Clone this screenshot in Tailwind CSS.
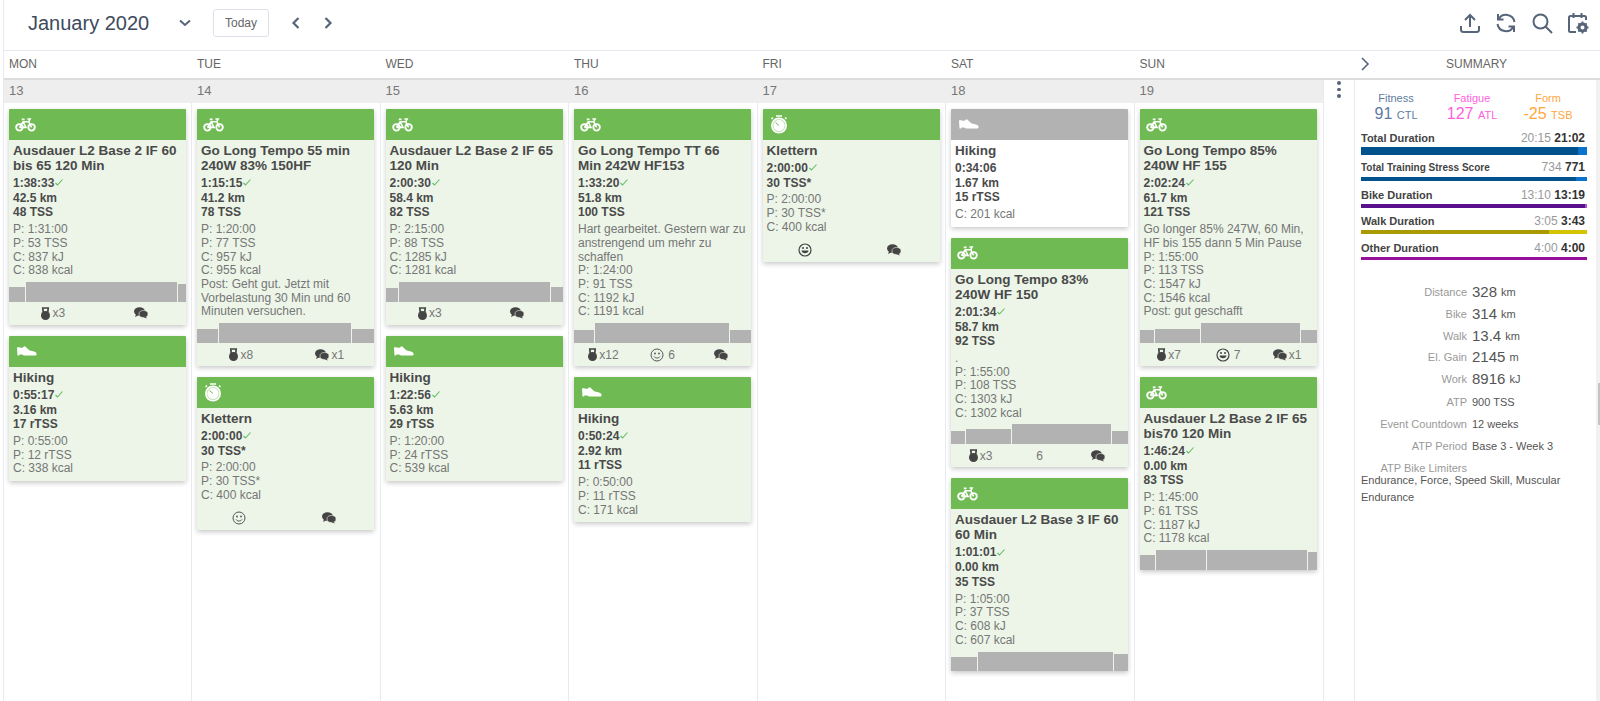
<!DOCTYPE html>
<html lang="en">
  <head>
    <meta charset="UTF-8" />
    <meta name="viewport" content="width=device-width, initial-scale=1.0" />
    <title>Calendar</title>
    <script src="https://cdn.jsdelivr.net/npm/@tailwindcss/browser@4"></script>
  </head>
  <body class="bg-white h-[701px] overflow-hidden font-['Liberation_Sans',Arial,sans-serif] text-[#444]">
    <div class="ml-[3px] border-l border-[#e6ebf2] h-[701px] flex flex-col">
      <!-- toolbar -->
      <header class="h-[51px] shrink-0 flex items-center border-b border-[#e4e8ef] pl-[24px] pr-[11px] pb-[4px] text-[#56657a]">
        <h1 class="text-[20px] leading-none text-[#3d4a5c] w-[150px]">January 2020</h1>
        <svg class="w-[14px] h-[14px]" viewBox="0 0 14 14" fill="none" stroke="currentColor" stroke-width="2"><path d="M2 4.500l5 4.500 5-4.500" /></svg>
        <button class="ml-[21px] w-[56px] h-[28px] border border-[#dde1e7] rounded-[3px] text-[12px] text-[#666]">Today</button>
        <svg class="ml-[20px] w-[14px] h-[14px]" viewBox="0 0 14 14" fill="none" stroke="currentColor" stroke-width="2.200"><path d="M9.500 2l-5 5 5 5" /></svg>
        <svg class="ml-[18px] w-[14px] h-[14px]" viewBox="0 0 14 14" fill="none" stroke="currentColor" stroke-width="2.200"><path d="M4.500 2l5 5-5 5" /></svg>
        <div class="ml-auto flex items-center gap-[14px]">
          <svg class="w-[22px] h-[22px]" viewBox="0 0 22 22" fill="none" stroke="currentColor" stroke-width="2"><path d="M11 15V3M6 8l5-5 5 5M2 14v3.500a2.500 2.500 0 0 0 2.500 2.500h13a2.500 2.500 0 0 0 2.500-2.500V14" /></svg>
          <svg class="w-[22px] h-[22px]" viewBox="0 0 22 22" fill="none" stroke="currentColor" stroke-width="2"><path d="M3 2v5.500h5.500M3.500 7.500A8.500 8.500 0 0 1 19.500 10M19 20v-5.500h-5.500M18.500 14.500A8.500 8.500 0 0 1 2.500 12" /></svg>
          <svg class="w-[22px] h-[22px]" viewBox="0 0 22 22" fill="none" stroke="currentColor" stroke-width="2"><circle cx="9.500" cy="9.500" r="7" /><path d="M14.500 14.500L21 21" /></svg>
          <svg class="w-[22px] h-[22px]" viewBox="0 0 22 22" fill="none" stroke="currentColor" stroke-width="2"><path d="M9 20H3.500A1.500 1.500 0 0 1 2 18.500V5.500A1.500 1.500 0 0 1 3.500 4h14A1.500 1.500 0 0 1 19 5.500V8M6.500 1v5M14.500 1v5" /><circle cx="15.500" cy="15.500" r="3.500" stroke-width="3" /><path stroke-width="1.800" d="M15.500 9.500v2M15.500 19.500v2M9.500 15.500h2M19.500 15.500h2M11.300 11.300l1.400 1.400M18.300 18.300l1.400 1.400M11.300 19.700l1.400-1.400M18.300 12.700l1.400-1.400" /></svg>
        </div>
      </header>

      <!-- weekday names -->
      <div class="h-[29px] shrink-0 flex items-center border-b-2 border-[#dcdcdc] pb-[2px] text-[12px] text-[#666]">
        <div class="w-[187px] pl-[5px]">MON</div>
        <div class="w-[188.500px] pl-[6px]">TUE</div>
        <div class="w-[188.500px] pl-[6px]">WED</div>
        <div class="w-[188.500px] pl-[6px]">THU</div>
        <div class="w-[188.500px] pl-[6px]">FRI</div>
        <div class="w-[188.500px] pl-[6px]">SAT</div>
        <div class="w-[188.500px] pl-[6px]">SUN</div>
        <div class="flex-1 flex items-center pl-[37px] pr-[10px]">
          <svg class="w-[12px] h-[14px] text-[#56657a]" viewBox="0 0 12 14" fill="none" stroke="currentColor" stroke-width="1.600"><path d="M3 1l6 6-6 6" /></svg>
          <span class="ml-[75px]">SUMMARY</span>
        </div>
      </div>

      <div class="flex-1 flex min-h-0">
        <!-- week grid -->
        <div class="w-[1319px] shrink-0 flex flex-col">
          <div class="h-[23px] shrink-0 bg-[#eeeeee] flex items-center pb-[2px] text-[13px] text-[#777]">
            <div class="w-[187px] pl-[5px]">13</div>
            <div class="w-[188.500px] pl-[6px]">14</div>
            <div class="w-[188.500px] pl-[6px]">15</div>
            <div class="w-[188.500px] pl-[6px]">16</div>
            <div class="w-[188.500px] pl-[6px]">17</div>
            <div class="w-[188.500px] pl-[6px]">18</div>
            <div class="w-[188.500px] pl-[6px]">19</div>
          </div>
          <div id="week" class="flex-1 flex min-h-0"></div>
        </div>

        <!-- three dot menu -->
        <div class="w-[31px] shrink-0 border-l border-[#e6ebf2] flex flex-col items-center gap-[3px] pt-[1px]">
          <span class="w-[3.500px] h-[3.500px] rounded-full bg-[#56657a]"></span>
          <span class="w-[3.500px] h-[3.500px] rounded-full bg-[#56657a]"></span>
          <span class="w-[3.500px] h-[3.500px] rounded-full bg-[#56657a]"></span>
        </div>

        <!-- summary -->
        <aside class="w-[242px] shrink-0 border-l border-[#e6ebf2] px-[6px] pt-[11px] text-[#444]">
          <div class="grid grid-cols-3 text-center w-[228px] -ml-[3px]">
            <div class="text-[#5f7ba0]">
              <div class="text-[11px] leading-[14px]">Fitness</div>
              <div class="text-[16px] leading-[18px]">91 <span class="text-[11px]">CTL</span></div>
            </div>
            <div class="text-[#ff5fdc]">
              <div class="text-[11px] leading-[14px]">Fatigue</div>
              <div class="text-[16px] leading-[18px]">127 <span class="text-[11px]">ATL</span></div>
            </div>
            <div class="text-[#ffa63d]">
              <div class="text-[11px] leading-[14px]">Form</div>
              <div class="text-[16px] leading-[18px]">-25 <span class="text-[11px]">TSB</span></div>
            </div>
          </div>
          <div id="bars" class="mt-[6px] w-[226px]"></div>
          <div class="mt-[21.500px] w-[226px] text-[11px] text-[#555]">
            <div class="flex items-center h-[22px]"><span class="w-[106px] text-right text-[#999]">Distance</span><span class="ml-[5px] text-[15px]">328</span><span class="ml-[4px]">km</span></div>
            <div class="flex items-center h-[22px]"><span class="w-[106px] text-right text-[#999]">Bike</span><span class="ml-[5px] text-[15px]">314</span><span class="ml-[4px]">km</span></div>
            <div class="flex items-center h-[21px]"><span class="w-[106px] text-right text-[#999]">Walk</span><span class="ml-[5px] text-[15px]">13.4</span><span class="ml-[4px]">km</span></div>
            <div class="flex items-center h-[22px]"><span class="w-[106px] text-right text-[#999]">El. Gain</span><span class="ml-[5px] text-[15px]">2145</span><span class="ml-[4px]">m</span></div>
            <div class="flex items-center h-[22px]"><span class="w-[106px] text-right text-[#999]">Work</span><span class="ml-[5px] text-[15px]">8916</span><span class="ml-[4px]">kJ</span></div>
            <div class="flex items-center h-[22px] mt-[1px]"><span class="w-[106px] text-right text-[#999]">ATP</span><span class="ml-[5px]">900 TSS</span></div>
            <div class="flex items-center h-[22px]"><span class="w-[106px] text-right text-[#999]">Event Countdown</span><span class="ml-[5px]">12 weeks</span></div>
            <div class="flex items-center h-[22px]"><span class="w-[106px] text-right text-[#999]">ATP Period</span><span class="ml-[5px]">Base 3 - Week 3</span></div>
            <div class="w-[106px] mt-[6px] text-right text-[#999] whitespace-nowrap leading-[8px]">ATP Bike Limiters</div>
            <div class="leading-[17px] w-[205px]">Endurance, Force, Speed Skill, Muscular Endurance</div>
          </div>
        </aside>
        <div class="relative flex-1 bg-[#f1f1f1]">
          <div class="absolute left-[2px] top-[303px] w-full h-[42px] bg-[#c4c4c4]"></div>
        </div>
      </div>
    </div>

    <script>
      const bikeIcon = `<svg class="w-[21px] h-[14px]" viewBox="0 0 22 15" fill="none" stroke="#fff"><circle cx="4.500" cy="10" r="3.500" stroke-width="2"/><circle cx="17.500" cy="10" r="3.500" stroke-width="2"/><path stroke-width="1.700" d="M4.500 10l4-6h6l3 6M8.500 4l3 6h-7M7 1.500h3M13 1h3l-1.500 3"/></svg>`;
      const shoeIcon = `<svg class="w-[21px] h-[15px] ml-[1px]" viewBox="0 0 21 15" fill="#fff"><path d="M1 3.500C2 3 3 3.500 4 3.500 5.500 4 7 4 8 2.500l1-.3 4 3.800c2 1.300 7 1 7.500 3.500.200 1 0 2-1 2H8l-2-1H3.500l-.5 1H1.500z"/></svg>`;
      const watchIcon = `<svg class="w-[18px] h-[19px] ml-[1px]" viewBox="0 0 18 19" fill="none"><circle cx="9" cy="10.500" r="8" fill="#fff"/><circle cx="9" cy="10.500" r="6.300" fill="#a8d696"/><circle cx="9" cy="10.500" r="5.700" fill="#fff"/><path d="M6 1h6M3 2.500l-1.500 1.500M15 2.500l1.500 1.500" stroke="#fff" stroke-width="1.500"/><path d="M5.500 7.500l3.500 3" stroke="#6fba52"/></svg>`;
      const medalIcon = `<svg class="w-[9px] h-[13px]" viewBox="0 0 9 13" fill="#444"><circle cx="4.500" cy="8.500" r="4.500"/><path d="M2.200 5L1.800 1h5.400l-.4 4" fill="none" stroke="#444" stroke-width="1.700"/></svg>`;
      const chatIcon = `<svg class="w-[14px] h-[12px]" viewBox="0 0 14 12" fill="#444"><ellipse cx="5.500" cy="4.500" rx="5.500" ry="4.200"/><path d="M2 7.500L1 10l3.500-1.800z"/><ellipse cx="9.500" cy="7" rx="4.500" ry="3.500" stroke="#ecf5e8" stroke-width=".6"/><path d="M11.500 9.500l1.500 2-3.500-1.200z"/></svg>`;
      const smileIcon = `<svg class="w-[14px] h-[14px] mr-[2px]" viewBox="0 0 14 14" fill="none" stroke="#555"><circle cx="7" cy="7" r="6"/><circle cx="5" cy="5.500" r=".9" fill="#555" stroke="none"/><circle cx="9" cy="5.500" r=".9" fill="#555" stroke="none"/><path d="M4 8.500c1.500 2 4.500 2 6 0"/></svg>`;
      const grinIcon = `<svg class="w-[14px] h-[14px] mr-[2px]" viewBox="0 0 14 14" fill="none" stroke="#444" stroke-width="1.200"><circle cx="7" cy="7" r="6"/><circle cx="5" cy="5" r="1" fill="#444" stroke="none"/><circle cx="9" cy="5" r="1" fill="#444" stroke="none"/><path d="M3.500 7.500h7c0 3.500-7 3.500-7 0z" fill="#444" stroke="none"/></svg>`;
      const checkIcon = `<svg class="inline-block w-[8px] h-[7px] ml-[1px] mb-[2px]" viewBox="0 0 8 7" fill="none" stroke="#62bd62" stroke-width="1.100"><path d="M.5 4l2 2L7.500 .5"/></svg>`;
      const icons = { bike: bikeIcon, shoe: shoeIcon, watch: watchIcon };

      // stat lines use the same shape for every workout card
      const week = [
        [
          { icon: "bike", title: "Ausdauer L2 Base 2 IF 60 bis 65 120 Min", stats: ["1:38:33", "42.5 km", "48 TSS"], lines: ["P: 1:31:00", "P: 53 TSS", "C: 837 kJ", "C: 838 kcal"], chart: [[17, 15], [152, 20], [8, 18]], foot: [["medal", "x3"], ["chat", ""]] },
          { icon: "shoe", title: "Hiking", stats: ["0:55:17", "3.16 km", "17 rTSS"], lines: ["P: 0:55:00", "P: 12 rTSS", "C: 338 kcal"] },
        ],
        [
          { icon: "bike", title: "Go Long Tempo 55 min 240W 83% 150HF", stats: ["1:15:15", "41.2 km", "78 TSS"], lines: ["P: 1:20:00", "P: 77 TSS", "C: 957 kJ", "C: 955 kcal", "Post: Geht gut. Jetzt mit Vorbelastung 30 Min und 60 Minuten versuchen."], chart: [[22, 14], [133, 20], [22, 14]], foot: [["medal", "x8"], ["chat", "x1"]] },
          { icon: "watch", title: "Klettern", stats: ["2:00:00", "30 TSS*"], lines: ["P: 2:00:00", "P: 30 TSS*", "C: 400 kcal"], foot: [["smile", ""], ["chat", ""]] },
        ],
        [
          { icon: "bike", title: "Ausdauer L2 Base 2 IF 65 120 Min", stats: ["2:00:30", "58.4 km", "82 TSS"], lines: ["P: 2:15:00", "P: 88 TSS", "C: 1285 kJ", "C: 1281 kcal"], chart: [[13, 14], [152, 20], [12, 15]], foot: [["medal", "x3"], ["chat", ""]] },
          { icon: "shoe", title: "Hiking", stats: ["1:22:56", "5.63 km", "29 rTSS"], lines: ["P: 1:20:00", "P: 24 rTSS", "C: 539 kcal"] },
        ],
        [
          { icon: "bike", title: "Go Long Tempo TT 66 Min 242W HF153", stats: ["1:33:20", "51.8 km", "100 TSS"], lines: ["Hart gearbeitet. Gestern war zu anstrengend um mehr zu schaffen", "P: 1:24:00", "P: 91 TSS", "C: 1192 kJ", "C: 1191 kcal"], chart: [[21, 13], [135, 20], [21, 13]], foot: [["medal", "x12"], ["smile", "6"], ["chat", ""]] },
          { icon: "shoe", title: "Hiking", stats: ["0:50:24", "2.92 km", "11 rTSS"], lines: ["P: 0:50:00", "P: 11 rTSS", "C: 171 kcal"] },
        ],
        [
          { icon: "watch", title: "Klettern", stats: ["2:00:00", "30 TSS*"], lines: ["P: 2:00:00", "P: 30 TSS*", "C: 400 kcal"], foot: [["grin", ""], ["chat", ""]] },
        ],
        [
          { icon: "shoe", title: "Hiking", stats: ["0:34:06", "1.67 km", "15 rTSS"], lines: ["C: 201 kcal"], unplanned: true, noCheck: true },
          { icon: "bike", title: "Go Long Tempo 83% 240W HF 150", stats: ["2:01:34", "58.7 km", "92 TSS"], lines: [".", "P: 1:55:00", "P: 108 TSS", "C: 1303 kJ", "C: 1302 kcal"], chart: [[15, 13], [46, 15], [100, 20], [16, 13]], foot: [["medal", "x3"], ["none", "6"], ["chat", ""]] },
          { icon: "bike", title: "Ausdauer L2 Base 3 IF 60 60 Min", stats: ["1:01:01", "0.00 km", "35 TSS"], lines: ["P: 1:05:00", "P: 37 TSS", "C: 608 kJ", "C: 607 kcal"], chart: [[27, 14], [136, 19], [14, 17]] },
        ],
        [
          { icon: "bike", title: "Go Long Tempo 85% 240W HF 155", stats: ["2:02:24", "61.7 km", "121 TSS"], lines: ["Go longer 85% 247W, 60 Min, HF bis 155 dann 5 Min Pause", "P: 1:55:00", "P: 113 TSS", "C: 1547 kJ", "C: 1546 kcal", "Post: gut geschafft"], chart: [[15, 13], [46, 14], [100, 20], [16, 13]], foot: [["medal", "x7"], ["grin", "7"], ["chat", "x1"]] },
          { icon: "bike", title: "Ausdauer L2 Base 2 IF 65 bis70 120 Min", stats: ["1:46:24", "0.00 km", "83 TSS"], lines: ["P: 1:45:00", "P: 61 TSS", "C: 1187 kJ", "C: 1178 kcal"], chart: [[16, 15], [51, 20], [101, 20], [9, 18]] },
        ],
      ];
      const footIcons = { medal: medalIcon, chat: chatIcon, smile: smileIcon, grin: grinIcon, none: "" };

      function renderCard(card) {
        const stats = card.stats
          .map((s, i) => `<div>${s}${i === 0 && !card.noCheck ? checkIcon : ""}</div>`)
          .join("");
        const lines = card.lines.map((l) => `<div>${l}</div>`).join("");
        const chart = card.chart
          ? `<div class="flex items-end gap-[1px] h-[20px] mt-[4px] ${card.foot ? "" : "mb-[1.500px]"}">${card.chart
              .map(([w, h], i) => `<div class="bg-[#b2b2b2] ${i === card.chart.length - 1 ? "flex-1" : ""}" style="${i === card.chart.length - 1 ? "" : `width:${w - 1}px;`}height:${h}px"></div>`)
              .join("")}</div>`
          : "";
        const foot = card.foot
          ? `<div class="flex h-[23px] items-center ${card.chart ? "" : "mt-[4px]"}">${card.foot
              .map(([icon, text]) => `<div class="flex-1 flex items-center justify-center gap-[2px] text-[12px] text-[#777]">${footIcons[icon]}<span>${text}</span></div>`)
              .join("")}</div>`
          : "";
        return `
          <div class="${card.unplanned ? "bg-white" : "bg-[#ecf5e8]"} rounded-[1px] shadow-[0_2px_5px_rgba(0,0,0,0.22)] mb-[11px]">
            <div class="${card.unplanned ? "bg-[#b2b2b2]" : "bg-[#6fba52]"} h-[31px] flex items-center pl-[6px] rounded-t-[1px]">${icons[card.icon]}</div>
            <div class="px-[4px] pt-[3px] ${card.chart || card.foot ? "" : "pb-[5px]"}">
              <div class="text-[13.500px] leading-[15px] font-bold text-[#4a4a4a] pr-[3px]">${card.title}</div>
              <div class="text-[12px] leading-[14.700px] font-bold text-[#4a4a4a] mt-[3px]">${stats}</div>
              <div class="text-[12px] leading-[13.700px] text-[#767676] mt-[3px]">${lines}</div>
            </div>
            ${chart}
            ${foot}
          </div>`;
      }

      document.getElementById("week").innerHTML = week
        .map((day, i) => `<div class="${i === 0 ? "w-[187px] pl-[5px] pr-[5px]" : "w-[188.500px] pl-[5px] pr-[5.500px] border-l border-[#e6ebf2]"} pt-[6px]">${day.map(renderCard).join("")}</div>`)
        .join("");

      const bars = [
        { label: "Total Duration", size: "text-[11px]", gap: "mb-[4px]", was: "20:15", now: "21:02", h: "h-[8px]", dark: "#00528c", light: "#0a74cc", pct: 96 },
        { label: "Total Training Stress Score", size: "text-[10px]", gap: "mb-[5.500px]", was: "734", now: "771", h: "h-[4px]", dark: "#00528c", light: "#0a74cc", pct: 95 },
        { label: "Bike Duration", size: "text-[11px]", gap: "mb-[5.500px]", was: "13:10", now: "13:19", h: "h-[4px]", dark: "#5a0f8c", light: "#a855d8", pct: 99 },
        { label: "Walk Duration", size: "text-[11px]", gap: "mb-[5.500px]", was: "3:05", now: "3:43", h: "h-[4px]", dark: "#a89a00", light: "#d4c400", pct: 83 },
        { label: "Other Duration", size: "text-[11px]", gap: "mb-[5.500px]", was: "4:00", now: "4:00", h: "h-[3.500px]", dark: "#96109a", light: "#96109a", pct: 100 },
      ];
      document.getElementById("bars").innerHTML = bars
        .map(
          (b) => `<div class="${b.gap}">
            <div class="flex justify-between items-baseline leading-[16px]">
              <span class="${b.size} font-bold">${b.label}</span>
              <span class="text-[12px] text-[#999] pr-[2px]">${b.was} <b class="text-[#333]">${b.now}</b></span>
            </div>
            <div class="flex ${b.h} mt-[1px]"><div style="width:${b.pct}%;background:${b.dark}"></div><div class="flex-1" style="background:${b.light}"></div></div>
          </div>`
        )
        .join("");
    </script>
  </body>
</html>
